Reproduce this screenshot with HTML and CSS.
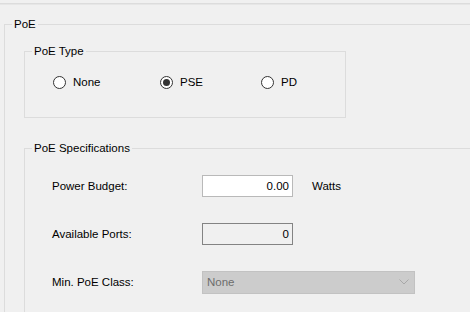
FILE: index.html
```html
<!DOCTYPE html>
<html>
<head>
<meta charset="utf-8">
<link rel="stylesheet" href="styles.css">
</head>
<body>
<div class="tab-line"></div>
<fieldset class="group group-outer">
  <legend>PoE</legend>
  <fieldset class="group group-type">
    <legend>PoE Type</legend>
    <div class="radios">
      <label class="radio"><span class="dot"></span>None</label>
      <label class="radio"><span class="dot checked"></span>PSE</label>
      <label class="radio"><span class="dot"></span>PD</label>
    </div>
  </fieldset>
  <fieldset class="group group-spec">
    <legend>PoE Specifications</legend>
    <div class="form">
      <span class="lbl">Power Budget:</span>
      <div class="field"><span class="textbox">0.00</span><span class="unit">Watts</span></div>
      <span class="lbl">Available Ports:</span>
      <div class="field"><span class="textbox readonly">0</span></div>
      <span class="lbl">Min. PoE Class:</span>
      <div class="field">
        <div class="combo"><span>None</span>
          <svg class="chev" width="10" height="6" viewBox="0 0 10 6"><path d="M0.5 0.5 L5 5 L9.5 0.5" fill="none" stroke="#a8a8a8" stroke-width="1"/></svg>
        </div>
      </div>
    </div>
  </fieldset>
</fieldset>
</body>
</html>
```
FILE: styles.css
```css
html, body {
  margin: 0;
  padding: 0;
  height: 312px;
  overflow: hidden;
  background: #f0f0f0;
}
body {
  font-family: "Liberation Sans", Arial, sans-serif;
  font-size: 11.5px;
  color: #000;
  padding-top: 3px;
}
.tab-line {
  height: 1px;
  background: #dcdcdc;
  border-bottom: 1px solid #e6e6e6;
}
.group {
  border: 1px solid #dcdcdc;
  margin: 0;
  min-width: 0;
}
.group legend {
  padding: 0 2px;
  line-height: 15px;
}
.group-outer {
  margin: 12px 0 0 4px;
  width: 520px;
  padding: 0 0 0 19px;
}
.group-outer > legend {
  margin-left: -12px;
}
.group-type {
  margin-top: 12px;
  width: 322px;
  box-sizing: border-box;
  padding: 15px 0 27px 28px;
}
.group-type > legend {
  margin-left: -21px;
}
.radios {
  display: grid;
  grid-template-columns: 107px 101px auto;
  height: 16px;
  align-items: center;
}
.radio {
  display: flex;
  align-items: center;
  gap: 7px;
}
.dot {
  width: 13px;
  height: 13px;
  box-sizing: border-box;
  border: 1px solid #333;
  border-radius: 50%;
  background: #fff;
  display: flex;
  align-items: center;
  justify-content: center;
}
.dot.checked::after {
  content: "";
  width: 7px;
  height: 7px;
  border-radius: 50%;
  background: #333;
}
.group-spec {
  margin-top: 23px;
  width: 490px;
  padding: 19px 0 40px 27px;
}
.group-spec > legend {
  margin-left: -20px;
}
.form {
  display: grid;
  grid-template-columns: 150px auto;
  grid-auto-rows: 22px;
  row-gap: 26px;
  align-items: center;
}
.field {
  display: flex;
  align-items: center;
  gap: 19px;
}
.textbox {
  width: 91px;
  height: 22px;
  box-sizing: border-box;
  border: 1px solid #b9b9b9;
  background: #fff;
  text-align: right;
  padding-right: 3px;
  line-height: 20px;
}
.textbox.readonly {
  background: #f0f0f0;
  border-color: #838383;
}
.combo {
  width: 213px;
  height: 23px;
  box-sizing: border-box;
  border: 1px solid #c2c2c2;
  background: #cccccc;
  color: #6d6d6d;
  display: flex;
  align-items: center;
  justify-content: space-between;
  padding: 0 5px 0 4px;
}
```
